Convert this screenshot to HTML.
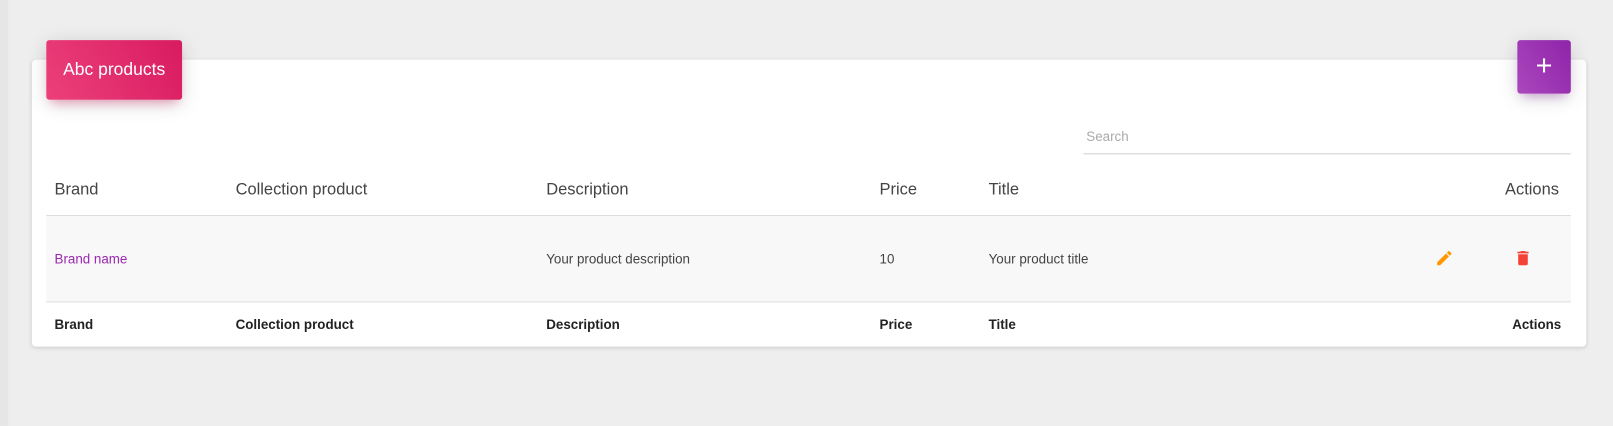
<!DOCTYPE html>
<html><head><style>
body{margin:0;width:1613px;height:414px;background:#eeeeee;font-family:"Liberation Sans",sans-serif;position:relative;overflow:hidden}
.wrap{position:absolute;left:0;top:0;width:1568px;height:403px;transform:scale(1.0287);transform-origin:0 0}
.strip{position:absolute;left:0;top:0;width:8px;height:414px;background:#e6e6e6}
.card{position:absolute;left:31px;top:58px;width:1511px;height:279px;background:#fff;border-radius:4px;box-shadow:0 1px 4px rgba(0,0,0,.14)}
.hdr{position:absolute;left:45px;top:39px;width:132px;height:58px;border-radius:3px;background:linear-gradient(60deg,#ec407a,#d81b60);box-shadow:0 4px 20px rgba(0,0,0,.14),0 7px 10px -5px rgba(233,30,99,.4);color:#fff;font-size:17px;line-height:58px;text-align:center}
.add{position:absolute;left:1475px;top:39px;width:52px;height:52px;border-radius:3px;background:linear-gradient(60deg,#ab47bc,#8e24aa);box-shadow:0 4px 20px rgba(0,0,0,.14),0 7px 10px -5px rgba(156,39,176,.4);color:#fff;font-size:28px;line-height:50px;text-align:center}
.search{position:absolute;left:1053px;top:125px;width:474px;height:25px;border-bottom:1px solid #d2d2d2;color:#aaa;font-size:13px;padding-left:3px;box-sizing:border-box}
.t{position:absolute;font-size:16px;color:#444}
.line{position:absolute;left:45px;width:1482px;height:1px;background:#ddd}
.row{position:absolute;left:45px;top:210px;width:1482px;height:84px;background:#f8f8f8}
.c{position:absolute;font-size:13px;color:#444}
.b{position:absolute;font-size:13px;font-weight:bold;color:#222}
</style></head><body>
<div class="wrap">
<div class="strip"></div>
<div class="card"></div>
<div class="hdr">Abc products</div>
<div class="add">+</div>
<div class="search">Search</div>
<div class="t" style="left:53px;top:176px">Brand</div>
<div class="t" style="left:229px;top:176px">Collection product</div>
<div class="t" style="left:531px;top:176px">Description</div>
<div class="t" style="left:855px;top:176px">Price</div>
<div class="t" style="left:961px;top:176px">Title</div>
<div class="t" style="left:1463px;top:176px">Actions</div>
<div class="line" style="top:209px"></div>
<div class="row"></div>
<div class="line" style="top:293px"></div>
<div class="c" style="left:53px;top:244px;color:#9c27b0">Brand name</div>
<div class="c" style="left:531px;top:244px">Your product description</div>
<div class="c" style="left:855px;top:244px">10</div>
<div class="c" style="left:961px;top:244px">Your product title</div>
<svg style="position:absolute;left:1397px;top:244px" width="14" height="14" viewBox="3 3 18 18"><path fill="#ff9800" d="M3 17.25V21h3.75L17.81 9.94l-3.75-3.75L3 17.25zM20.71 7.04a1 1 0 000-1.41l-2.34-2.34a1 1 0 00-1.41 0l-1.83 1.83 3.75 3.75 1.83-1.83z"/></svg>
<svg style="position:absolute;left:1474px;top:244px" width="13" height="14" viewBox="5 3 14 18"><path fill="#f44336" d="M6 19c0 1.1.9 2 2 2h8c1.1 0 2-.9 2-2V7H6v12zM19 4h-3.5l-1-1h-5l-1 1H5v2h14V4z"/></svg>
<div class="b" style="left:53px;top:308px">Brand</div>
<div class="b" style="left:229px;top:308px">Collection product</div>
<div class="b" style="left:531px;top:308px">Description</div>
<div class="b" style="left:855px;top:308px">Price</div>
<div class="b" style="left:961px;top:308px">Title</div>
<div class="b" style="left:1470px;top:308px">Actions</div>
</div>
</body></html>
